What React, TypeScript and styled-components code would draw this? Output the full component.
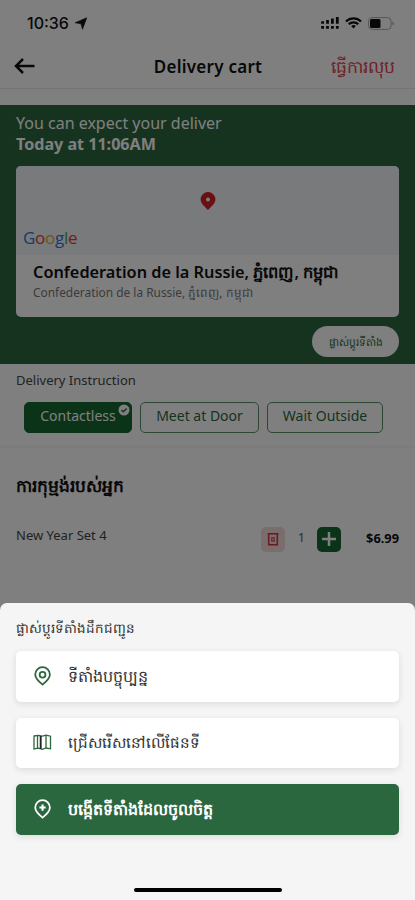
import React from 'react';
import styled, { createGlobalStyle, css } from 'styled-components';

const GlobalStyle = createGlobalStyle`
  *, *::before, *::after { box-sizing: border-box; }
  body { margin: 0; background: #808080; }
  button { font: inherit; border: 0; margin: 0; padding: 0; background: none; color: inherit; }
`;

const latin = '"Noto Sans", "Open Sans", sans-serif';

const Screen = styled.div`
  position: relative;
  width: 415px;
  height: 900px;
  overflow: hidden;
  background: #fff;
  color: #111;
  font-family: ${latin};
`;

const Page = styled.main`
  display: flex;
  flex-direction: column;
  height: 100%;
`;

const StatusBar = styled.div`
  display: flex;
  align-items: center;
  height: 46px;
  padding: 0 20px 0 27px;
  font: 500 16px/20px Inter, sans-serif;
`;

const Clock = styled.span`
  width: 48px;
  white-space: nowrap;
`;

const StatusIcons = styled.div`
  display: flex;
  align-items: center;
  gap: 6px;
  margin-left: auto;
`;

const Header = styled.header`
  display: grid;
  grid-template-columns: 94px 1fr 87px;
  align-items: center;
  height: 43px;
  padding: 0 20px 1px 14px;
  border-bottom: 1px solid #e9e9ef;
`;

const BackButton = styled.button`
  display: flex;
  padding-bottom: 2px;
`;

const Line = styled.span<{ $size: number; $weight?: number; $track?: number; $color?: string }>`
  display: block;
  white-space: nowrap;
  font-size: ${(p) => p.$size}px;
  line-height: 20px;
  font-weight: ${(p) => p.$weight ?? 400};
  letter-spacing: ${(p) => p.$track ?? 0}px;
  color: ${(p) => p.$color ?? 'inherit'};
`;

const HeaderTitle = styled(Line)`
  justify-self: center;
`;

const HeaderAction = styled(Line)`
  justify-self: end;
`;

const DeliveryPanel = styled.section`
  display: flex;
  flex-direction: column;
  height: 259px;
  margin-top: 16px;
  padding: 8px 16px 0;
  background: #2b673e;
  color: #fff;
`;

const ExpectedTime = styled(Line)`
  margin-top: 1px;
`;

const AddressCard = styled.div`
  height: 151px;
  margin-top: 12px;
  border-radius: 5px;
  overflow: hidden;
  background: #fff;
  color: #111;
`;

const MapPreview = styled.div`
  display: grid;
  grid-template-rows: 62px 1fr;
  height: 89px;
  padding-left: 7px;
  background: #f3f5f8;
`;

const PinHolder = styled.div`
  display: flex;
  justify-content: center;
  align-items: flex-end;
  padding: 0 7px 18px 0;
`;

const AddressText = styled.div`
  padding: 7px 0 0 17px;
`;

const ChangePill = styled.button`
  align-self: flex-end;
  display: flex;
  align-items: center;
  justify-content: center;
  width: 87px;
  height: 31px;
  margin-top: 9px;
  border-radius: 16px;
  background: #fff;
`;

const Instructions = styled.section`
  height: 84px;
  padding: 6px 16px 0;
  border-bottom: 3px solid #f8f8f8;
`;

const ChipRow = styled.div`
  display: flex;
  gap: 8px;
  margin: 12px 0 0 8px;
`;

const Chip = styled.button<{ $width: number; $active?: boolean }>`
  position: relative;
  display: flex;
  align-items: center;
  justify-content: center;
  width: ${(p) => p.$width}px;
  height: 31px;
  padding-bottom: 3px;
  border: 1px solid #5b8f6b;
  border-radius: 5px;
  color: #2b673e;
  ${(p) => p.$active && css`
    border-color: #17662e;
    background: #17662e;
    color: #fff;
  `}
`;

const CheckBadge = styled.svg`
  position: absolute;
  top: 1px;
  right: 1px;
`;

const Order = styled.section`
  display: flex;
  flex-direction: column;
  gap: 30px;
  padding: 28px 16px 0;
`;

const OrderItem = styled.div`
  display: grid;
  grid-template-columns: 245px 25px 31px 24px 1fr;
  align-items: center;
  height: 25px;
`;

const ItemName = styled(Line)`
  padding-bottom: 8px;
  line-height: 18px;
`;

const Quantity = styled(Line)`
  text-align: center;
  padding-bottom: 2px;
`;

const Price = styled(Line)`
  justify-self: end;
  padding-bottom: 3px;
`;

const SquareButton = styled.button<{ $bg: string }>`
  display: flex;
  align-items: center;
  justify-content: center;
  width: 24px;
  height: 25px;
  border-radius: 5px;
  background: ${(p) => p.$bg};
`;

const Scrim = styled.div`
  position: absolute;
  inset: 0;
  background: rgba(0, 0, 0, 0.5);
`;

const Sheet = styled.section`
  position: absolute;
  left: 0;
  right: 0;
  bottom: 0;
  display: flex;
  flex-direction: column;
  height: 297px;
  padding: 15px 16px 8px;
  border-radius: 7px 7px 0 0;
  background: #f5f5f5;
  color: #333;
`;

const OptionList = styled.div`
  display: flex;
  flex-direction: column;
  gap: 16px;
  margin-top: 13px;
`;

const Option = styled.button<{ $primary?: boolean }>`
  display: grid;
  grid-template-columns: 20px 1fr;
  column-gap: 16px;
  align-items: center;
  justify-items: start;
  height: 50.5px;
  padding: 0 16px 1px;
  border-radius: 5px;
  background: ${(p) => (p.$primary ? '#2b673e' : '#fff')};
  color: ${(p) => (p.$primary ? '#fff' : '#333')};
  box-shadow: 0 2px 6px rgba(60, 30, 30, 0.12);
`;

const HomeIndicator = styled.div`
  align-self: center;
  width: 148px;
  height: 4px;
  margin-top: auto;
  border-radius: 2px;
  background: #000;
`;

const PinIcon = ({ color, plus }: { color: string; plus?: boolean }) => (
  <svg width="20" height="20" viewBox="1 1.500 18 18" fill="none" stroke={color} strokeWidth="1.600">
    <path d="M10.500 18.300C8 16.300 3.900 13 3.900 9.200a6.600 6.600 0 0 1 13.200 0c0 3.800-4.100 7.100-6.600 9.100Z" />
    {plus ? <path d="M10.500 6.400v5.600M7.700 9.200h5.600" strokeWidth="1.900" /> : <circle cx="10.500" cy="9.300" r="2.600" />}
  </svg>
);

const MapIcon = () => (
  <svg width="20" height="20" viewBox="0 0 20 20" fill="none" stroke="#2b673e" strokeWidth="1.300">
    <path d="M2 4 6.300 3.400 10.500 4.200 14 3.200 18.500 4.200v12.600L14 16 10.500 17.300 6.300 16.200 2 17Z" />
    <path d="M5.500 3.500v12.500M14 3.500v12.500" />
    <path d="M8.700 4v13" stroke="#222" strokeWidth="1.900" />
  </svg>
);

const letters: [string, string][] = [
  ['G', '#3276dc'], ['o', '#df3f35'], ['o', '#e2ac25'], ['g', '#3276dc'], ['l', '#46a05a'], ['e', '#df3f35'],
];

const MapLogo = styled.div`
  font: 500 17px/20px "Open Sans", sans-serif;
  letter-spacing: -0.3px;
`;

const LogoLetter = styled.span<{ $color: string }>`
  color: ${(p) => p.$color};
`;

export default function App() {
  return (
    <Screen>
      <GlobalStyle />
      <Page>
        <StatusBar>
          <Clock>10:36</Clock>
          <svg width="12" height="13" viewBox="0 0 12 12"><path d="M11.800.2 7.500 11.800 6 6.300 0 5.300Z" fill="#111" stroke="#111" strokeWidth=".6" /></svg>
          <StatusIcons>
            <svg width="18" height="12" viewBox="0 0 18 12" fill="none" stroke="#111" strokeWidth="2.800">
              <path d="M1.600 4.200v2.600M6.500 3v3.800M11.400 1.500v5.300M16.300 0v6.800" />
              <path d="M.2 10.400H3M5.100 10.400h2.800M10 10.400h2.800M14.900 10.400h2.800" strokeWidth="2.600" />
            </svg>
            <svg width="17" height="12" viewBox="0 0 17 12" fill="none" stroke="#111" strokeWidth="2.200">
              <path d="M1 4.500a10.800 10.800 0 0 1 15 0M3.700 7.200a7 7 0 0 1 9.600 0" />
              <path d="m8.500 11.500-2.400-2.400a3.500 3.500 0 0 1 4.800 0Z" fill="#111" stroke="none" />
            </svg>
            <svg width="27" height="13" viewBox="0 0 27 13">
              <rect x=".6" y=".6" width="22.500" height="11.800" rx="3.500" fill="none" stroke="#aaa" />
              <rect x="2" y="2" width="10.500" height="9" rx="1.500" fill="#111" />
              <path d="M24.500 4.500c2 .8 2 3.200 0 4Z" fill="#aaa" />
            </svg>
          </StatusIcons>
        </StatusBar>
        <Header>
          <BackButton aria-label="Back">
            <svg width="21" height="16" viewBox="0 0 21 16" fill="none" stroke="#111" strokeWidth="2.500">
              <path d="M20.500 8H2.500M9 1 2 8 9 15" />
            </svg>
          </BackButton>
          <HeaderTitle $size={17} $weight={600} $track={0.25}>Delivery cart</HeaderTitle>
          <HeaderAction $size={17.3} $color="#e04450">ធ្វើការលុប</HeaderAction>
        </Header>
        <DeliveryPanel>
          <Line $size={16}>You can expect your deliver</Line>
          <ExpectedTime $size={16.1} $weight={700}>Today at 11:06AM</ExpectedTime>
          <AddressCard>
            <MapPreview>
              <PinHolder>
                <svg width="16" height="18" viewBox="0 0 16 18">
                  <path d="M8 18C5.500 14.800.6 11.800.6 7.400a7.400 7.400 0 0 1 14.800 0C15.400 11.800 10.500 14.800 8 18Z" fill="#d51f25" />
                  <circle cx="8" cy="7.500" r="1.900" fill="#fff" />
                </svg>
              </PinHolder>
              <MapLogo>{letters.map(([l, c], i) => <LogoLetter key={i} $color={c}>{l}</LogoLetter>)}</MapLogo>
            </MapPreview>
            <AddressText>
              <Line $size={16.3} $weight={600}>Confederation de la Russie, ភ្នំពេញ, កម្ពុជា</Line>
              <Line $size={11.9} $color="#777">Confederation de la Russie, ភ្នំពេញ, កម្ពុជា</Line>
            </AddressText>
          </AddressCard>
          <ChangePill><Line $size={10.7} $weight={500} $color="#2b673e">ផ្លាស់ប្ដូរទីតាំង</Line></ChangePill>
        </DeliveryPanel>
        <Instructions>
          <Line $size={13} $color="#444">Delivery Instruction</Line>
          <ChipRow>
            <Chip $width={108} $active>
              <Line $size={14}>Contactless</Line>
              <CheckBadge width="12" height="12" viewBox="0 0 12 12">
                <circle cx="6" cy="6" r="5.500" fill="#fff" />
                <path d="m3.500 6 1.800 1.800L8.700 4.400" fill="none" stroke="#2b673e" strokeWidth="1.400" />
              </CheckBadge>
            </Chip>
            <Chip $width={119}><Line $size={14}>Meet at Door</Line></Chip>
            <Chip $width={116}><Line $size={14}>Wait Outside</Line></Chip>
          </ChipRow>
        </Instructions>
        <Order>
          <Line $size={17.1} $weight={600}>ការកុម្មង់របស់អ្នក</Line>
          <OrderItem>
            <ItemName $size={13} $color="#444">New Year Set 4</ItemName>
            <SquareButton $bg="#f4dada" aria-label="Remove">
              <svg width="12" height="14" viewBox="0 0 12 14" fill="none" stroke="#d3333f" strokeWidth="1.500">
                <path d="M.5 1.800h11M1.700 2v10.700h8.600V2" />
                <path d="M4.800 5.500v4M7.200 5.500v4M4.500 5.800h3M4.500 9h3" strokeWidth="1" />
              </svg>
            </SquareButton>
            <Quantity $size={12} $color="#555">1</Quantity>
            <SquareButton $bg="#17662e" aria-label="Add">
              <svg width="14" height="14" viewBox="0 0 14 14" stroke="#fff" strokeWidth="2.500"><path d="M0 7h14M7 0v14" /></svg>
            </SquareButton>
            <Price $size={12.8} $weight={700}>$6.99</Price>
          </OrderItem>
        </Order>
      </Page>
      <Scrim />
      <Sheet>
        <Line $size={13.5}>ផ្លាស់ប្ដូរទីតាំងដឹកជញ្ជូន</Line>
        <OptionList>
          <Option><PinIcon color="#2b673e" /><Line $size={16}>ទីតាំងបច្ចុប្បន្ន</Line></Option>
          <Option><MapIcon /><Line $size={15.2}>ជ្រើសរើសនៅលើផែនទី</Line></Option>
          <Option $primary><PinIcon color="#fff" plus /><Line $size={15.9} $weight={600}>បង្កើតទីតាំងដែលចូលចិត្ត</Line></Option>
        </OptionList>
        <HomeIndicator />
      </Sheet>
    </Screen>
  );
}
